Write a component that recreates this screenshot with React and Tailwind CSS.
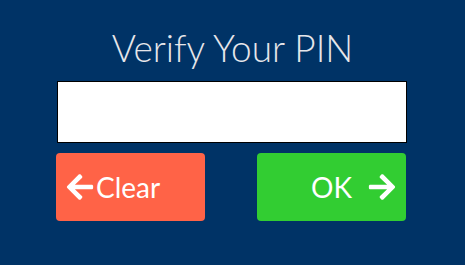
import React, { useState } from 'react';
import { FaArrowLeft, FaArrowRight } from 'react-icons/fa';

const App = () => {
  const [pin, setPin] = useState('');

  return (
    <div className="flex h-[265px] w-[465px] flex-col bg-[#003366] pt-[26px] font-['Lato',sans-serif]">
      <h1 className="text-center text-[37px] font-light leading-[44px] text-[#e6e6ea]">Verify Your PIN</h1>
      <div className="mt-[11px] ml-[56px] flex w-[351px] flex-col">
        <input
          type="password"
          value={pin}
          onChange={(e) => setPin(e.target.value)}
          className="ml-[1px] h-[62px] w-[350px] border border-black bg-white px-3 text-2xl outline-none"
        />
        <div className="mt-[10px] flex w-[350px] justify-between">
          <button
            type="button"
            onClick={() => setPin('')}
            className="flex h-[68px] w-[149px] items-center rounded-[4px] bg-[#ff6347] pl-[9px] text-[28px] text-white"
          >
            <FaArrowLeft size={30} />
            <span className="ml-[1px]">Clear</span>
          </button>
          <button
            type="button"
            className="flex h-[68px] w-[149px] items-center justify-end rounded-[4px] bg-[#32cd32] pr-[9px] text-[28px] text-white"
          >
            <span>OK</span>
            <FaArrowRight size={30} className="ml-[15px]" />
          </button>
        </div>
      </div>
    </div>
  );
};

export default App;
